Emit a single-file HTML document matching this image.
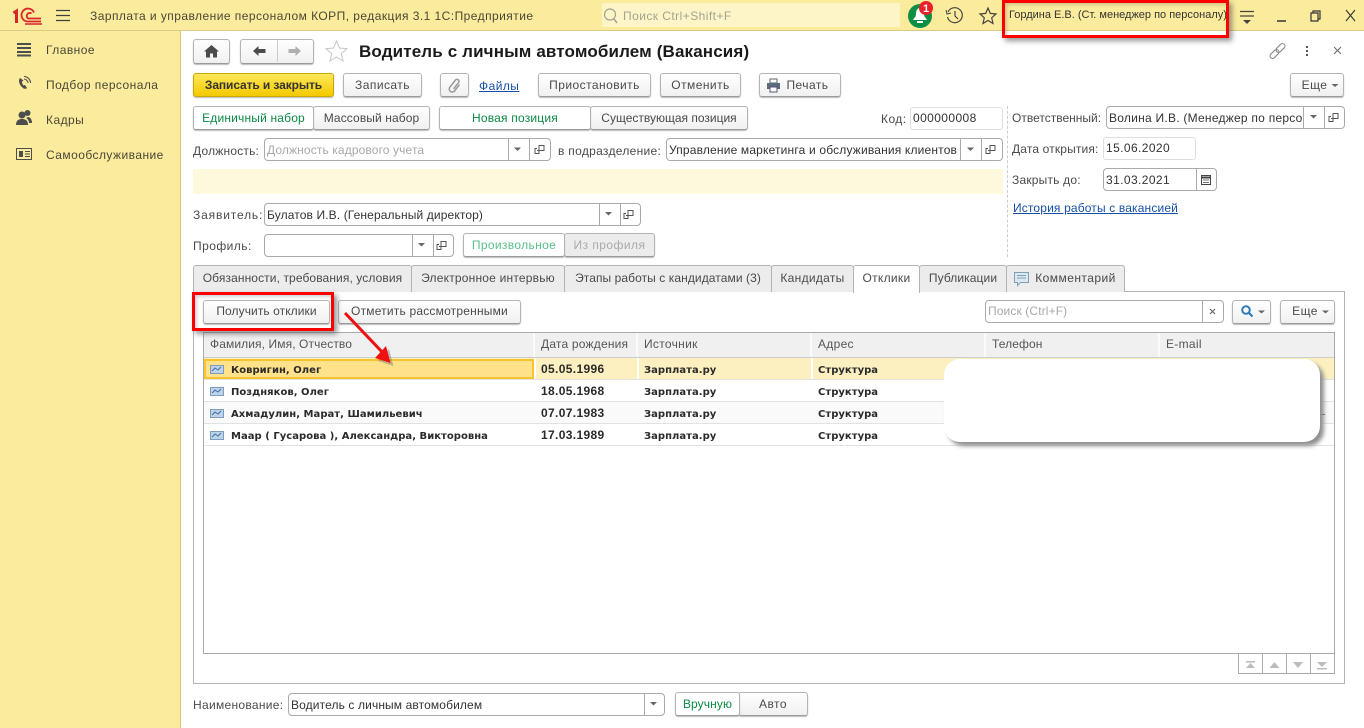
<!DOCTYPE html>
<html lang="ru"><head><meta charset="utf-8"><title>Водитель с личным автомобилем</title>
<style>
html,body{margin:0;padding:0;width:1364px;height:728px;overflow:hidden;background:#fff}
body{position:relative;font:12px "Liberation Sans",sans-serif;color:#4a4a4a}
div,a,span.t{position:absolute;box-sizing:border-box}
.t{position:absolute;white-space:nowrap;line-height:16px;height:16px;letter-spacing:.45px}
.b{border:1px solid #b4b4b4;border-bottom-color:#9a9a9a;border-radius:3px;background:linear-gradient(#fff,#f0f0f0);box-shadow:0 1px 1px #bbb;text-align:center;line-height:22px;white-space:nowrap;letter-spacing:.45px;color:#4a4a4a}
.w{background:#fff;color:#0a8a44;z-index:1}
.f{border:1px solid #aaa;border-radius:4px;background:#fff;line-height:22px;padding-left:2px;white-space:nowrap;overflow:hidden;letter-spacing:.12px;color:#333}
.l{border:1px solid #dedede;border-radius:3px;background:#fff;line-height:21px;padding-left:2px;letter-spacing:.4px;color:#333}
.s{width:1px;background:#aaa;top:0;bottom:0}
.tab{border:1px solid #b4b4b4;border-bottom:0;background:#ececec;top:265px;height:27px;line-height:25px;text-align:center;white-space:nowrap;letter-spacing:.1px;border-radius:3px 3px 0 0}
.hc{top:333px;height:24px;line-height:23px;padding-left:6px;background:#f0f0f0;border-right:2px solid #fafafa;color:#555;letter-spacing:.1px;white-space:nowrap}
.r{left:204px;width:1130px;height:22px;border-bottom:1px solid #e2e2e2}
.d{position:absolute;white-space:nowrap;font:bold 10px "DejaVu Sans",sans-serif;color:#2a2a2a;line-height:14px;letter-spacing:.03px;margin-top:2px}
.dt{font:bold 12px "Liberation Sans",sans-serif;letter-spacing:.35px;margin-top:0}
a.t{color:#1550a8;text-decoration:underline}
.red{border:3px solid #f00;box-shadow:3px 3px 5px rgba(80,80,80,.6),inset 2px 2px 3px rgba(80,80,80,.25)}
svg{position:absolute;left:0;top:0;z-index:5}
</style></head><body>

<!-- top bar & sidebar -->
<div style="left:0;top:0;width:1364px;height:31px;background:#fbec9d;border-bottom:1px solid #d9ca84"></div>
<div style="left:0;top:31px;width:181px;height:697px;background:#fbec9d;border-right:1px solid #d2c582"></div>
<span class="t" style="left:90px;top:8px;color:#4a4636">Зарплата и управление персоналом КОРП, редакция 3.1 1С:Предприятие</span>
<div style="left:602px;top:3px;width:298px;height:24px;background:#fdf5c8;border-radius:2px"></div>
<span class="t" style="left:623px;top:8px;color:#a5a28c">Поиск Ctrl+Shift+F</span>
<span class="t" style="left:1009px;top:7px;font-size:11px;letter-spacing:0;color:#333">Гордина Е.В. (Ст. менеджер по персоналу)</span>

<span class="t" style="left:46px;top:42px;color:#4a4636">Главное</span>
<span class="t" style="left:46px;top:77px;color:#4a4636">Подбор персонала</span>
<span class="t" style="left:46px;top:112px;color:#4a4636">Кадры</span>
<span class="t" style="left:46px;top:147px;color:#4a4636">Самообслуживание</span>

<!-- header -->
<div class="b" style="left:193px;top:39px;width:37px;height:25px"></div>
<div class="b" style="left:240px;top:39px;width:74px;height:25px"></div>
<div style="left:277px;top:40px;width:1px;height:22px;background:#ccc"></div>
<span class="t" style="left:359px;top:41px;height:22px;line-height:22px;font-size:17px;font-weight:bold;color:#1a1a1a;letter-spacing:.14px">Водитель с личным автомобилем (Вакансия)</span>

<!-- commands -->
<div class="b" style="left:193px;top:73px;width:141px;height:24px;background:linear-gradient(#fde85a,#f4c900);border-color:#c9a800;color:#333;font-weight:bold;letter-spacing:-.1px">Записать и закрыть</div>
<div class="b" style="left:343px;top:73px;width:79px;height:24px">Записать</div>
<div class="b" style="left:440px;top:73px;width:29px;height:24px"></div>
<a class="t" style="left:479px;top:78px" href="#">Файлы</a>
<div class="b" style="left:538px;top:73px;width:113px;height:24px">Приостановить</div>
<div class="b" style="left:660px;top:73px;width:81px;height:24px">Отменить</div>
<div class="b" style="left:759px;top:73px;width:82px;height:24px;padding-left:15px">Печать</div>
<div class="b" style="left:1290px;top:73px;width:54px;height:24px;padding-right:5px">Еще</div>

<!-- toggles -->
<div class="b" style="left:313px;top:106px;width:117px;height:24px;letter-spacing:.1px">Массовый набор</div>
<div class="b w" style="left:193px;top:106px;width:121px;height:24px;letter-spacing:.18px">Единичный набор</div>
<div class="b" style="left:590px;top:106px;width:158px;height:24px;letter-spacing:0">Существующая позиция</div>
<div class="b w" style="left:439px;top:106px;width:152px;height:24px;letter-spacing:.2px">Новая позиция</div>
<span class="t" style="left:881px;top:111px">Код:</span>
<div class="l" style="left:910px;top:107px;width:93px;height:23px">000000008</div>

<div style="left:1007px;top:106px;width:0;height:151px;border-left:1px dashed #ccc"></div>

<span class="t" style="left:1012px;top:110px;letter-spacing:0">Ответственный:</span>
<div class="f" style="left:1106px;top:106px;width:239px;height:23px"><span style="display:block;width:194px;overflow:hidden;letter-spacing:.25px">Волина И.В. (Менеджер по персонал</span><div class="s" style="left:196px"></div><div class="s" style="left:217px"></div></div>

<span class="t" style="left:193px;top:143px;letter-spacing:.2px">Должность:</span>
<div class="f" style="left:264px;top:138px;width:287px;height:23px;color:#a8a8a8">Должность кадрового учета<div class="s" style="left:243px"></div><div class="s" style="left:264px"></div></div>
<span class="t" style="left:558px;top:143px;letter-spacing:.3px">в подразделение:</span>
<div class="f" style="left:666px;top:138px;width:337px;height:23px"><span style="display:block;width:292px;overflow:hidden;letter-spacing:.17px">Управление маркетинга и обслуживания клиентов</span><div class="s" style="left:293px"></div><div class="s" style="left:314px"></div></div>
<span class="t" style="left:1012px;top:141px;letter-spacing:.15px">Дата открытия:</span>
<div class="l" style="left:1103px;top:137px;width:93px;height:23px">15.06.2020</div>

<div style="left:193px;top:169px;width:810px;height:25px;background:#fef8dc"></div>
<span class="t" style="left:1012px;top:172px;letter-spacing:.2px">Закрыть до:</span>
<div class="f" style="left:1103px;top:168px;width:114px;height:23px;letter-spacing:.4px">31.03.2021<div class="s" style="left:92px"></div></div>
<a class="t" style="left:1013px;top:200px;letter-spacing:.15px" href="#">История работы с вакансией</a>

<span class="t" style="left:193px;top:207px;letter-spacing:.85px">Заявитель:</span>
<div class="f" style="left:264px;top:203px;width:377px;height:23px">Булатов И.В. (Генеральный директор)<div class="s" style="left:334px"></div><div class="s" style="left:355px"></div></div>
<span class="t" style="left:193px;top:238px">Профиль:</span>
<div class="f" style="left:264px;top:234px;width:190px;height:23px"><div class="s" style="left:147px"></div><div class="s" style="left:168px"></div></div>
<div class="b" style="left:564px;top:233px;width:91px;height:24px;color:#aaa;background:#ececec">Из профиля</div>
<div class="b w" style="left:463px;top:233px;width:102px;height:24px;color:#58c08a;letter-spacing:.35px">Произвольное</div>

<!-- panel & tabs -->
<div style="left:193px;top:291px;width:1152px;height:393px;border:1px solid #b4b4b4"></div>
<div class="tab" style="left:193px;width:219px">Обязанности, требования, условия</div>
<div class="tab" style="left:411px;width:154px;letter-spacing:.2px">Электронное интервью</div>
<div class="tab" style="left:564px;width:208px;letter-spacing:.08px">Этапы работы с кандидатами (3)</div>
<div class="tab" style="left:771px;width:83px;letter-spacing:.3px">Кандидаты</div>
<div class="tab" style="left:853px;width:67px;background:#fff;height:28px;z-index:1;letter-spacing:.3px">Отклики</div>
<div class="tab" style="left:919px;width:88px">Публикации</div>
<div class="tab" style="left:1006px;width:119px;padding-left:20px;letter-spacing:.45px">Комментарий</div>

<div class="b" style="left:203px;top:300px;width:127px;height:24px;line-height:21px;letter-spacing:.08px">Получить отклики</div>
<div class="b" style="left:338px;top:300px;width:183px;height:24px;line-height:21px;letter-spacing:.2px">Отметить рассмотренными</div>
<div class="f" style="left:985px;top:300px;width:239px;height:23px;color:#a8a8a8;line-height:21px">Поиск (Ctrl+F)<div class="s" style="left:216px"></div></div>
<div class="b" style="left:1232px;top:300px;width:39px;height:24px"></div>
<div class="b" style="left:1280px;top:300px;width:55px;height:24px;padding-right:5px;line-height:21px">Еще</div>

<!-- table -->
<div style="left:203px;top:332px;width:1132px;height:322px;border:1px solid #aaa"></div>
<div class="hc" style="left:204px;width:331px">Фамилия, Имя, Отчество</div>
<div class="hc" style="left:535px;width:103px;letter-spacing:.2px">Дата рождения</div>
<div class="hc" style="left:638px;width:174px;letter-spacing:.3px">Источник</div>
<div class="hc" style="left:812px;width:174px;letter-spacing:.3px">Адрес</div>
<div class="hc" style="left:986px;width:174px">Телефон</div>
<div class="hc" style="left:1160px;width:174px;border-right:0;letter-spacing:.3px">E-mail</div>
<div style="left:204px;top:357px;width:1130px;height:1px;background:#ccc"></div>

<div class="r" style="top:358px;background:#fdf0c0"></div>
<div style="left:204px;top:359px;width:330px;height:20px;background:#ffe28a;border:2px solid #f8c42e"></div>
<div class="r" style="top:380px"></div>
<div class="r" style="top:402px;background:#fafafa"></div>
<div class="r" style="top:424px"></div>
<div style="left:534px;top:358px;width:2px;height:21px;background:#fff"></div>
<div style="left:637px;top:358px;width:2px;height:21px;background:#fff"></div>
<div style="left:811px;top:358px;width:2px;height:21px;background:#fff"></div>

<span class="d" style="left:231px;top:362px">Ковригин, Олег</span><span class="d dt" style="left:541px;top:362px">05.05.1996</span><span class="d" style="left:644px;top:362px">Зарплата.ру</span><span class="d" style="left:818px;top:362px">Структура</span>
<span class="d" style="left:231px;top:384px">Поздняков, Олег</span><span class="d dt" style="left:541px;top:384px">18.05.1968</span><span class="d" style="left:644px;top:384px">Зарплата.ру</span><span class="d" style="left:818px;top:384px">Структура</span>
<span class="d" style="left:231px;top:406px">Ахмадулин, Марат, Шамильевич</span><span class="d dt" style="left:541px;top:406px">07.07.1983</span><span class="d" style="left:644px;top:406px">Зарплата.ру</span><span class="d" style="left:818px;top:406px">Структура</span>
<span class="d" style="left:231px;top:428px">Маар ( Гусарова ), Александра, Викторовна</span><span class="d dt" style="left:541px;top:428px">17.03.1989</span><span class="d" style="left:644px;top:428px">Зарплата.ру</span><span class="d" style="left:818px;top:428px">Структура</span>

<div style="left:1238px;top:653px;width:97px;height:21px;border:1px solid #aaa;background:#fff"></div>
<div style="left:1262px;top:653px;width:1px;height:21px;background:#aaa"></div>
<div style="left:1286px;top:653px;width:1px;height:21px;background:#aaa"></div>
<div style="left:1310px;top:653px;width:1px;height:21px;background:#aaa"></div>

<!-- white cover -->
<div style="left:1320px;top:414px;width:5px;height:1px;background:#555"></div>
<div style="left:944px;top:359px;width:376px;height:83px;background:#fff;border-radius:16px;box-shadow:4px 4px 4px #8f8f8f;z-index:2"></div>

<!-- bottom -->
<span class="t" style="left:193px;top:697px;letter-spacing:.3px">Наименование:</span>
<div class="f" style="left:288px;top:693px;width:377px;height:23px">Водитель с личным автомобилем<div class="s" style="left:355px"></div></div>
<div class="b" style="left:738px;top:692px;width:70px;height:24px">Авто</div>
<div class="b w" style="left:675px;top:692px;width:65px;height:24px;letter-spacing:.1px">Вручную</div>

<!-- red rectangles -->
<div class="red" style="left:192px;top:292px;width:142px;height:39px;z-index:3"></div>
<div class="red" style="left:1002px;top:0;width:227px;height:38px;z-index:3"></div>

<svg width="1364" height="728" viewBox="0 0 1364 728">
<!-- 1C logo -->
<g fill="none" stroke="#d8262c" stroke-width="1.8">
<path d="M13.500 13l3-2v12" stroke-width="3"/>
<path d="M41 21.500H27a6.500 6.500 0 1 1 7-9"/><path d="M41 18.500H28a3 3 0 1 1 3.500-5"/>
</g>
<path d="M25 24h17" stroke="#d8262c" stroke-width="1.500"/>
<!-- hamburger -->
<path d="M56 10.500h14M56 15.500h14M56 20.500h14" stroke="#3f3f3f" stroke-width="1.300"/>
<!-- sidebar icons -->
<path d="M17 44h14M17 48h14M17 52h14M17 55.500h14" stroke="#4d4d4d" stroke-width="2"/>
<path d="M20 78c-2 2-1 7 3 10 1 1 3 1 4 0l-2-3-1.500 .5c-1-1-1.500-2.500-1.500-4l1.500-1z" fill="#4d4d4d"/>
<path d="M24 79c2 0 4 2 4 4M24 76.500c3.500 0 6.500 3 6.500 6.500" stroke="#4d4d4d" fill="none" stroke-width="1.100"/>
<circle cx="22" cy="115" r="3.500" fill="#4d4d4d"/><circle cx="27.500" cy="113" r="3" fill="#4d4d4d"/>
<path d="M16 125c0-5 3-6 6-6s6 1 6 6z" fill="#4d4d4d"/><path d="M29 123h3c0-4-2-6-4-6l-2 1c2 1 3 3 3 5z" fill="#4d4d4d"/>
<rect x="16.500" y="148.500" width="15" height="11" fill="none" stroke="#4d4d4d"/>
<rect x="19" y="151" width="4" height="6" fill="#4d4d4d"/><path d="M25 151.500h5M25 154h5M25 156.500h5" stroke="#4d4d4d"/>
<!-- search icon top -->
<circle cx="610" cy="14.500" r="5.500" fill="none" stroke="#a5a28c" stroke-width="1.200"/><path d="M614 19l3 4" stroke="#a5a28c" stroke-width="1.500"/>
<!-- bell -->
<circle cx="920" cy="16" r="12" fill="#0f8f45"/>
<path d="M920 8c-3 0-4 3-4 6 0 3-2 4-3 6h14c-1-2-3-3-3-6 0-3-1-6-4-6z" fill="#fff"/><rect x="917" y="21" width="6" height="2" fill="#fff"/>
<circle cx="926" cy="8" r="7" fill="#e8202a"/><text x="926" y="12" font-family="Liberation Sans" font-size="11" font-weight="bold" fill="#fff" text-anchor="middle">1</text>
<!-- history -->
<path d="M948 12a7.500 7.500 0 1 1-.5 5" fill="none" stroke="#444" stroke-width="1.200"/><path d="M946 10l1 4 4-1" fill="none" stroke="#444"/><path d="M955 11v5l3 3" fill="none" stroke="#444" stroke-width="1.200"/>
<!-- star top -->
<path d="M988 8l2.300 5.400 5.700 .6-4.300 3.800 1.300 5.700-5-3-5 3 1.300-5.700-4.300-3.800 5.700-.6z" fill="none" stroke="#444" stroke-width="1.200"/>
<!-- right menu -->
<path d="M1240 11.500h14M1240 16h14" stroke="#444" stroke-width="1.200"/><path d="M1243 20h8l-4 4z" fill="#444"/>
<path d="M1277 21h9" stroke="#333" stroke-width="1.500"/>
<path d="M1311 13h7v8h-7zM1313 13v-2h7v8h-2" fill="none" stroke="#333" stroke-width="1.200"/>
<path d="M1346 10l9 11M1355 10l-9 11" stroke="#333" stroke-width="1.100"/>
<!-- home / arrows / star -->
<path d="M211.500 45l-7.500 6.500h2v6h4v-4h3v4h4v-6h2z" fill="#4b4b4b"/>
<path d="M253 51l5.500-5v3h7v4h-7v3z" fill="#4b4b4b"/><path d="M301 51l-5.500-5v3h-7v4h7v3z" fill="#b0b0b0"/>
<path d="M336.500 41l3 7 7.500 .7-5.700 5 1.800 7.300-6.600-4-6.600 4 1.800-7.300-5.700-5 7.500-.7z" fill="#fff" stroke="#c3c8cf"/>
<!-- right header -->
<g transform="rotate(-45 1277.500 51)" fill="none" stroke="#888" stroke-width="1.100"><rect x="1268" y="48.500" width="10.500" height="5" rx="2.500"/><rect x="1276.500" y="48.500" width="10.500" height="5" rx="2.500"/></g>
<path d="M1307 46v2M1307 50v2M1307 54v2" stroke="#555" stroke-width="2"/>
<path d="M1334 47l7 7M1341 47l-7 7" stroke="#666"/>
<!-- clip -->
<g transform="rotate(38 455 85.500)"><path d="M458 82v8a3 3 0 0 1-6 0v-9a2 2 0 0 1 4 0v8" fill="none" stroke="#999" stroke-width="1.500"/></g>
<!-- printer -->
<rect x="770" y="79" width="7" height="4" fill="#fff" stroke="#666"/><rect x="767" y="83" width="13" height="6" fill="#5b6b7b"/><rect x="770" y="87" width="7" height="5" fill="#fff" stroke="#557"/>
<g fill="#666">
<path d="M1331.500 84h7l-3.500 3z"/><path d="M1322 310.500h7l-3.500 3z"/><path d="M1258 310.500h7l-3.500 3z"/>
<path d="M514 147.500h7l-3.500 3.500z"/><path d="M967 147.500h7l-3.500 3.500z"/><path d="M1310 115h7l-3.500 3.500z"/>
<path d="M605 212h7l-3.500 3.500z"/><path d="M418 243h7l-3.500 3.500z"/><path d="M650 702h7l-3.500 3.500z"/>
</g>
<!-- open icons -->
<g fill="none" stroke="#555" transform="translate(1.500 4)">
<path d="M535.500 146.500h7v-5h-5v8h-4v-5h2"/><path d="M986.500 146.500h7v-5h-5v8h-4v-5h2"/><path d="M1329.500 114.500h7v-5h-5v8h-4v-5h2"/>
<path d="M624.500 211.500h7v-5h-5v8h-4v-5h2"/><path d="M437.500 242.500h7v-5h-5v8h-4v-5h2"/>
</g>
<!-- calendar -->
<rect x="1201.500" y="175.500" width="9" height="9" fill="#fff" stroke="#444"/><path d="M1201 177.500h10" stroke="#444" stroke-width="2"/><path d="M1203 180h6M1203 182.500h6" stroke="#777"/>
<!-- comment tab icon -->
<path d="M1014.500 272.500h14v10h-8l-3 3v-3h-3z" fill="#dbe8f2" stroke="#7f9fb5"/><path d="M1017 275.500h9M1017 278h9" stroke="#7f9fb5"/>
<!-- search clear / magnifier -->
<path d="M1210 309l5 5M1215 309l-5 5" stroke="#666" stroke-width="1.200"/>
<circle cx="1246" cy="310" r="3.800" fill="none" stroke="#2f7ab8" stroke-width="2"/><path d="M1249 313l3.500 3.500" stroke="#2f7ab8" stroke-width="2.200"/>
<!-- row icons -->
<g>
<rect x="210.500" y="365.500" width="13" height="8" fill="#bcd3ea" stroke="#7f9dbb"/><path d="M212 371l3-3 3 2 3-3" stroke="#3f6f9f" fill="none"/>
<rect x="210.500" y="387.500" width="13" height="8" fill="#bcd3ea" stroke="#7f9dbb"/><path d="M212 393l3-3 3 2 3-3" stroke="#3f6f9f" fill="none"/>
<rect x="210.500" y="409.500" width="13" height="8" fill="#bcd3ea" stroke="#7f9dbb"/><path d="M212 415l3-3 3 2 3-3" stroke="#3f6f9f" fill="none"/>
<rect x="210.500" y="431.500" width="13" height="8" fill="#bcd3ea" stroke="#7f9dbb"/><path d="M212 437l3-3 3 2 3-3" stroke="#3f6f9f" fill="none"/>
</g>
<!-- table nav -->
<g fill="#bcbcbc">
<path d="M1246 661h9v1.500h-9zM1250.500 663l4.500 5h-9z"/>
<path d="M1274.500 662l5 6h-10z"/>
<path d="M1293 662h10l-5 6z"/>
<path d="M1317 662h10l-5 5z"/><path d="M1317 668h10v1.500h-10z"/>
</g>
<!-- red arrow -->
<path d="M345 313l38 40" stroke="#777" stroke-width="3" opacity=".4" transform="translate(3 3)"/>
<path d="M390.500 363L375 358l11-12z" fill="#777" opacity=".45" transform="translate(3 3)"/>
<path d="M345 313l38 40" stroke="#f01010" stroke-width="3"/>
<path d="M390.500 363L375 358l11-12z" fill="#f01010"/>
</svg>
</body></html>
